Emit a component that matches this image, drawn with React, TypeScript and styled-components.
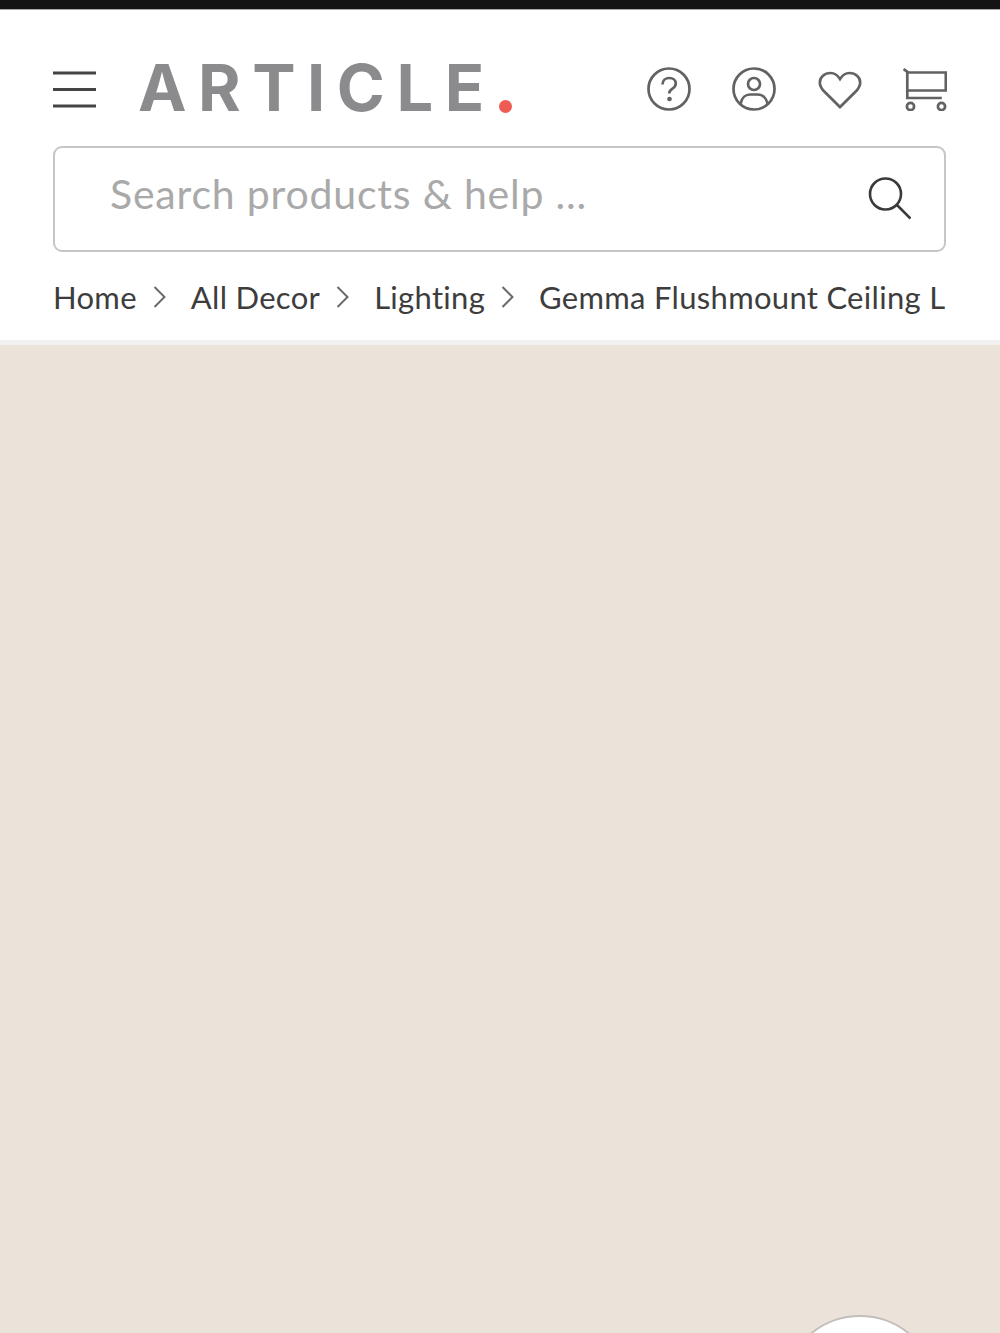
import React from "react";
import styled, { createGlobalStyle } from "styled-components";

const GlobalStyle = createGlobalStyle`
  html, body {
    margin: 0;
    padding: 0;
    background: #fff;
  }
  * {
    box-sizing: border-box;
  }
`;

const Page = styled.div`
  width: 1000px;
  height: 1333px;
  display: flex;
  flex-direction: column;
  overflow: hidden;
  font-family: "Lato", "Liberation Sans", sans-serif;
`;

const StatusBar = styled.div`
  height: 10px;
  flex: none;
  background: #141414;
  border-bottom: 1px solid #a8a8a8;
`;

const Header = styled.header`
  flex: none;
  height: 335px;
  padding: 48px 54px 0 53px;
  background: #fff;
  border-bottom: 5px solid #f3f1f0;
`;

const TopRow = styled.div`
  display: flex;
  align-items: center;
  height: 62px;
`;

const MenuIcon = styled.svg`
  width: 44px;
  height: 44px;
  flex: none;
  margin-right: 41px;
`;

const Logo = styled.div`
  margin-top: -2px;
  font-family: "Inter", "Liberation Sans", sans-serif;
  font-size: 65px;
  font-weight: 700;
  line-height: 62px;
  letter-spacing: 11.5px;
  color: #8b8b8e;
  white-space: nowrap;
`;

const LogoDot = styled.span`
  display: inline-block;
  width: 13px;
  height: 13px;
  margin: 0 0 -2px 3px;
  border-radius: 50%;
  background: #ee5b52;
`;

const IconRow = styled.div`
  display: flex;
  gap: 41.5px;
  margin: 0 -1px 0 auto;
`;

const Icon = styled.svg`
  width: 44px;
  height: 44px;
  display: block;
  fill: none;
  stroke: #626262;
  stroke-width: 2.7;
`;

const SearchBox = styled.div`
  display: flex;
  align-items: center;
  justify-content: space-between;
  height: 106px;
  margin-top: 26px;
  padding: 0 33px 0 55px;
  border: 2px solid #c6c6c6;
  border-radius: 9px;
`;

const Placeholder = styled.span`
  font-size: 41px;
  letter-spacing: 0.8px;
  color: #a9a9a9;
  position: relative;
  top: -6px;
`;

const SearchIcon = styled.svg`
  width: 44px;
  height: 44px;
  fill: none;
  stroke: #3a3a3a;
  stroke-width: 2.6;
`;

const Crumbs = styled.nav`
  display: flex;
  align-items: center;
  height: 36px;
  margin-top: 27px;
  white-space: nowrap;
`;

const Crumb = styled.span`
  flex: none;
  font-size: 31px;
  letter-spacing: 0.3px;
  color: #3d3d3d;
`;

const Chevron = styled.svg`
  flex: none;
  width: 13px;
  height: 24px;
  margin: 0 25px 0 16px;
  fill: none;
  stroke: #6a6a6a;
  stroke-width: 2;
`;

const Hero = styled.main`
  position: relative;
  flex: 1;
  background: #ebe2da;
`;

const RoundButton = styled.div`
  position: absolute;
  left: 782px;
  top: 970px;
  width: 156px;
  height: 156px;
  border-radius: 50%;
  background: #fff;
  border: 2px solid #c2bfbb;
`;

const crumbs = ["Home", "All Decor", "Lighting"];

const App: React.FC = () => (
  <Page>
    <GlobalStyle />
    <StatusBar />
    <Header>
      <TopRow>
        <MenuIcon viewBox="0 0 44 44" stroke="#444" strokeWidth="3">
          <path d="M0 6h43M0 22.5h43M0 39h43" />
        </MenuIcon>
        <Logo>
          ARTICLE
          <LogoDot />
        </Logo>
        <IconRow>
          <Icon viewBox="0 0 44 44">
            <circle cx="22" cy="22" r="20.5" />
            <path d="M15.5 17.5c0-4 3-6.5 6.800-6.500 3.700 0 6.500 2.300 6.500 5.600 0 2.700-1.700 4-3.600 5.200-1.900 1.200-3 2.300-3 4.700" />
            <circle cx="22.500" cy="32" r="1" fill="#626262" />
          </Icon>
          <Icon viewBox="0 0 44 44">
            <circle cx="22" cy="22" r="20.500" />
            <circle cx="22" cy="17" r="6" />
            <path d="M8.500 37c1.200-6.500 5.500-9.500 9.500-9.500h8c4 0 8.300 3 9.500 9.500" />
          </Icon>
          <Icon viewBox="0 0 44 44">
            <path d="M22 12C19.500 8 16.500 6 12.500 6 6.500 6 1.800 10 1.800 15.500c0 3.500 1.500 5.800 4 8.500L22 40l16.200-16c2.500-2.700 4-5 4-8.500C42.200 10 37.500 6 31.500 6c-4 0-7 2-9.500 6z" />
          </Icon>
          <Icon viewBox="0 0 44 44">
            <path d="M0.500 2l3.800 2.800V31h34.500M4.300 5.500h38.500v18H4.300" />
            <circle cx="7.500" cy="39.500" r="3.600" />
            <circle cx="38.500" cy="39.500" r="3.600" />
          </Icon>
        </IconRow>
      </TopRow>
      <SearchBox>
        <Placeholder>Search products &amp; help ...</Placeholder>
        <SearchIcon viewBox="0 0 44 44">
          <circle cx="18.500" cy="17" r="15.500" />
          <path d="M30 28l13.500 13.500" />
        </SearchIcon>
      </SearchBox>
      <Crumbs>
        {crumbs.map((label) => (
          <React.Fragment key={label}>
            <Crumb>{label}</Crumb>
            <Chevron viewBox="0 0 13 24">
              <path d="M1.500 2l10 10-10 10" />
            </Chevron>
          </React.Fragment>
        ))}
        <Crumb>Gemma Flushmount Ceiling L</Crumb>
      </Crumbs>
    </Header>
    <Hero>
      <RoundButton />
    </Hero>
  </Page>
);

export default App;
